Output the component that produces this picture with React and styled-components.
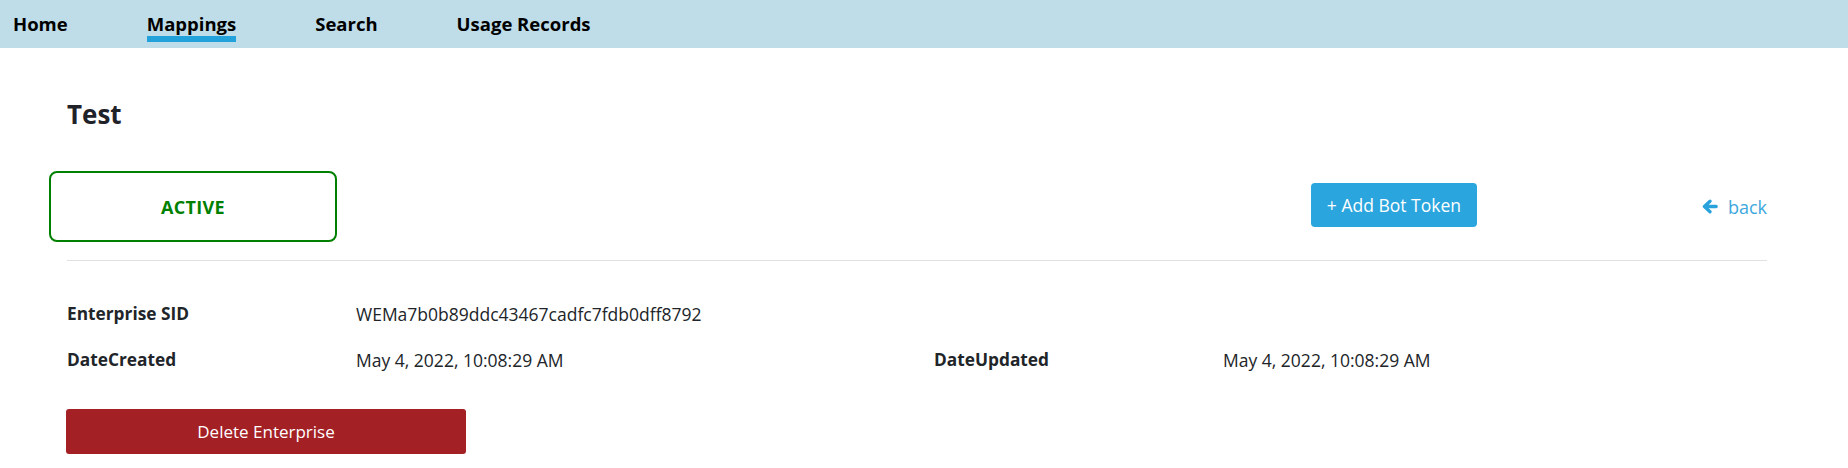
import React from "react";
import styled, { createGlobalStyle } from "styled-components";

const GlobalStyle = createGlobalStyle`
  html, body {
    margin: 0;
    padding: 0;
    background: #fff;
  }
  body {
    font-family: "Open Sans", "Noto Sans", Arial, sans-serif;
    color: #212529;
  }
`;

const Page = styled.div`
  width: 1848px;
  min-height: 468px;
  background: #fff;
`;

const Navbar = styled.nav`
  height: 48px;
  box-sizing: border-box;
  background: #bfdde8;
  display: flex;
  align-items: flex-start;
  padding: 11px 0 0 13px;
  gap: 79px;
`;

const NavLink = styled.a`
  font-size: 18.5px;
  font-weight: 700;
  line-height: 25px;
  color: #000;
  text-decoration: none;
  border-bottom: 6px solid ${({ active }) => (active ? "#22a1db" : "transparent")};
  cursor: pointer;
`;

const Content = styled.main`
  padding: 0 0 0 67px;
  width: 1700px;
`;

const Title = styled.h2`
  margin: 48px 0 0;
  font-size: 26px;
  line-height: 36px;
  font-weight: 700;
  color: #1f2329;
`;

const HeaderRow = styled.div`
  margin-top: 39px;
  display: flex;
  align-items: center;
  height: 71px;
`;

const StatusBox = styled.div`
  margin-left: -18px;
  width: 288px;
  height: 71px;
  box-sizing: border-box;
  border: 2px solid #008000;
  border-radius: 8px;
  display: flex;
  align-items: center;
  justify-content: center;
  color: #008000;
  font-weight: 700;
  font-size: 18px;
  letter-spacing: 0.3px;
`;

const AddButton = styled.button`
  margin-left: auto;
  margin-top: -4px;
  width: 166px;
  height: 44px;
  border: none;
  border-radius: 4px;
  background: #2aa5dd;
  color: #fff;
  font-family: inherit;
  font-size: 17.5px;
  cursor: pointer;
`;

const BackLink = styled.a`
  margin-left: 225px;
  display: flex;
  align-items: center;
  gap: 10px;
  color: #3da8de;
  font-size: 18px;
  text-decoration: none;
  cursor: pointer;
`;

const ArrowIcon = styled.svg`
  width: 16px;
  height: 15px;
  color: #2aa3dc;
  flex: none;
`;

const Divider = styled.hr`
  margin: 18px 0 0;
  border: none;
  border-top: 1px solid #dfe1e3;
`;

const DetailGrid = styled.div`
  margin-top: 40px;
  width: 1734px;
  display: grid;
  grid-template-columns: 289px 578px 289px 578px;
  grid-auto-rows: 26px;
  row-gap: 20px;
  font-size: 17.5px;
  line-height: 26px;
`;

const Label = styled.div`
  font-weight: 700;
  font-size: 17.3px;
  color: #212529;
`;

const Value = styled.div`
  color: #212529;
`;

const DeleteButton = styled.button`
  display: block;
  margin: 36px 0 0 -1px;
  width: 400px;
  height: 45px;
  border: none;
  border-radius: 3px;
  background: #a32025;
  color: #fff;
  font-family: inherit;
  font-size: 17px;
  cursor: pointer;
`;

const links = ["Home", "Mappings", "Search", "Usage Records"];

const App = () => {
  return (
    <Page>
      <GlobalStyle />
      <Navbar>
        {links.map((l) => (
          <NavLink key={l} active={l === "Mappings" ? 1 : 0}>
            {l}
          </NavLink>
        ))}
      </Navbar>
      <Content>
        <Title>Test</Title>
        <HeaderRow>
          <StatusBox>ACTIVE</StatusBox>
          <AddButton>+ Add Bot Token</AddButton>
          <BackLink>
            <ArrowIcon viewBox="0 0 16 15">
              <path
                d="M8 2.2 L2.4 7.5 L8 12.8 M3 7.5 H14.2"
                fill="none"
                stroke="currentColor"
                strokeWidth="3.3"
                strokeLinecap="round"
                strokeLinejoin="round"
              />
            </ArrowIcon>
            back
          </BackLink>
        </HeaderRow>
        <Divider />
        <DetailGrid>
          <Label>Enterprise SID</Label>
          <Value>WEMa7b0b89ddc43467cadfc7fdb0dff8792</Value>
          <div />
          <div />
          <Label>DateCreated</Label>
          <Value>May 4, 2022, 10:08:29 AM</Value>
          <Label>DateUpdated</Label>
          <Value>May 4, 2022, 10:08:29 AM</Value>
        </DetailGrid>
        <DeleteButton>Delete Enterprise</DeleteButton>
      </Content>
    </Page>
  );
};

export default App;
